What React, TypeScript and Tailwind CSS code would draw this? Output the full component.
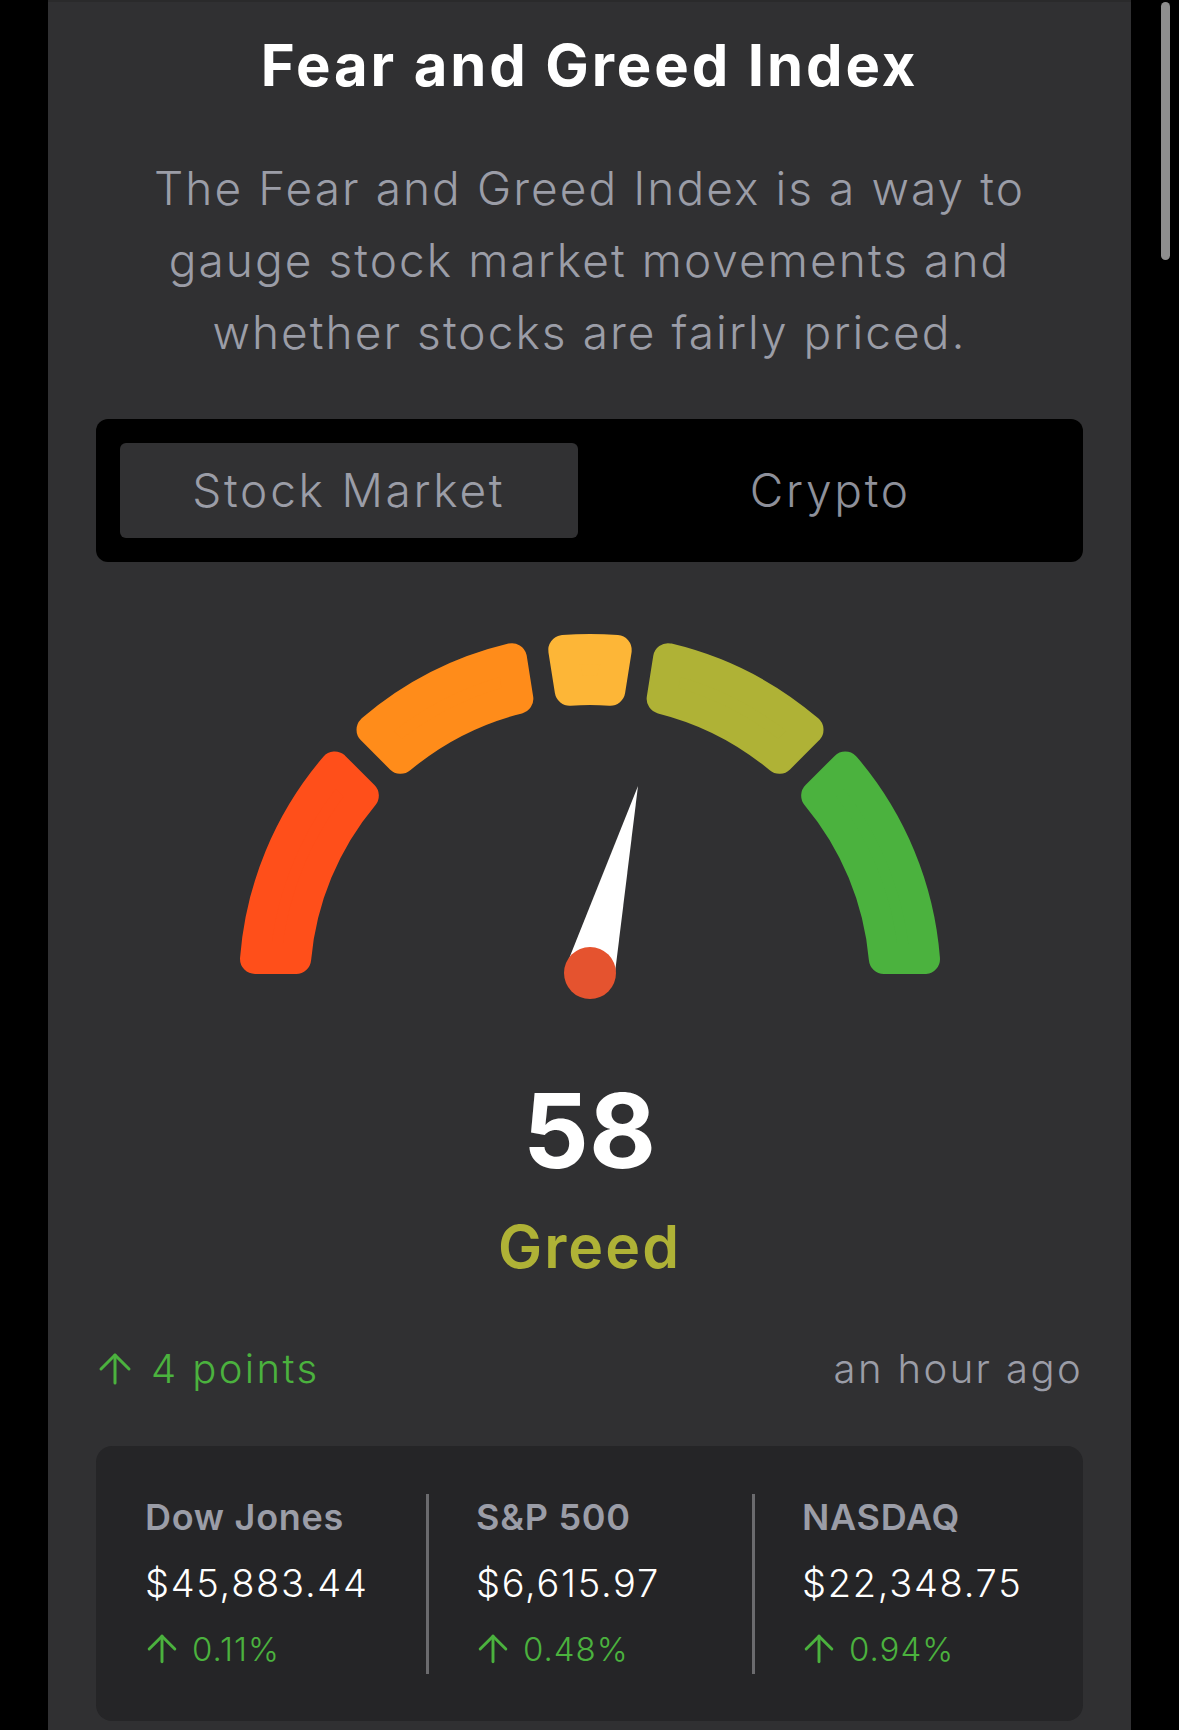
import { ArrowUp } from "lucide-react";

const CX = 360;
const CY = 364;
const R_OUT = 351;
const R_IN = 280;
const GAP = 11;
const CORNER = 15;

const segments = [
  { from: 0, to: 45, color: "#FF4F1A" },
  { from: 45, to: 81, color: "#FF8C1A" },
  { from: 81, to: 99, color: "#FDB637" },
  { from: 99, to: 135, color: "#AFB236" },
  { from: 135, to: 180, color: "#4BB23E" },
];

const markets = [
  { name: "Dow Jones", price: "$45,883.44", change: "0.11%" },
  { name: "S&P 500", price: "$6,615.97", change: "0.48%" },
  { name: "NASDAQ", price: "$22,348.75", change: "0.94%" },
];

// angle measured from the left end of the gauge, going over the top
function point(theta: number, rho: number) {
  const a = (theta * Math.PI) / 180;
  return `${(CX - rho * Math.cos(a)).toFixed(2)} ${(CY - rho * Math.sin(a)).toFixed(2)}`;
}

function segmentPath(from: number, to: number) {
  const d = GAP + CORNER;
  const ro = R_OUT - CORNER;
  const ri = R_IN + CORNER;
  const offO = (Math.asin(d / ro) * 180) / Math.PI;
  const offI = (Math.asin(d / ri) * 180) / Math.PI;
  return [
    `M ${point(from + offO, ro)}`,
    `A ${ro} ${ro} 0 0 1 ${point(to - offO, ro)}`,
    `L ${point(to - offI, ri)}`,
    `A ${ri} ${ri} 0 0 0 ${point(from + offI, ri)}`,
    "Z",
  ].join(" ");
}

function Gauge({ value }: { value: number }) {
  const theta = (value / 100) * 180;
  const a = (theta * Math.PI) / 180;
  const px = CX;
  const py = CY - 12;
  const ux = -Math.cos(a);
  const uy = -Math.sin(a);
  const len = 193;
  const half = 25;
  const tip = `${px + ux * len},${py + uy * len}`;
  const b1 = `${px - uy * half},${py + ux * half}`;
  const b2 = `${px + uy * half},${py - ux * half}`;
  return (
    <svg width="720" height="400" viewBox="0 0 720 400" className="mx-auto block">
      {segments.map((s) => (
        <path
          key={s.from}
          d={segmentPath(s.from, s.to)}
          fill={s.color}
          stroke={s.color}
          strokeWidth={CORNER * 2}
          strokeLinejoin="round"
        />
      ))}
      <polygon points={`${tip} ${b1} ${b2}`} fill="#ffffff" />
      <circle cx={px} cy={py} r="26" fill="#E5532F" />
    </svg>
  );
}

export default function App() {
  return (
    <div className="relative min-h-screen bg-black" style={{ fontFamily: "Inter, 'Open Sans', sans-serif" }}>
      <div className="ml-[48px] w-[1083px] min-h-[1730px] bg-[#303032] border-t-2 border-[#2a2a2b] px-12">
        <h1 className="pt-[34px] text-center text-[58px] font-bold leading-none tracking-[0.05em] text-white">
          Fear and Greed Index
        </h1>
        <p className="mt-[58px] text-center text-[46px] font-light leading-[72px] tracking-[0.045em] text-[#9b9da7]">
          The Fear and Greed Index is a way to
          <br />
          gauge stock market movements and
          <br />
          whether stocks are fairly priced.
        </p>

        <div className="mt-[51px] grid grid-cols-2 gap-6 rounded-xl bg-black p-6">
          <div className="flex h-[95px] items-center justify-center rounded-md bg-[#313133] text-[46px] font-light tracking-[0.06em] text-[#9b9da7]">
            Stock Market
          </div>
          <div className="flex h-[95px] items-center justify-center text-[46px] font-light tracking-[0.06em] text-[#8e909a]">
            Crypto
          </div>
        </div>

        <div className="mt-[59px]">
          <Gauge value={58} />
        </div>

        <div className="mt-[58px] text-center text-[103px] font-bold leading-none text-white">58</div>
        <div className="mt-[35px] text-center text-[59px] font-semibold leading-none tracking-[0.035em] text-[#AFB236]">
          Greed
        </div>

        <div className="mt-[69px] flex items-center justify-between text-[40px] font-light leading-none tracking-[0.06em]">
          <div className="flex items-center gap-3 text-[#4BB23E]">
            <ArrowUp size={48} strokeWidth={1.5} className="-ml-[5px]" />
            <span>4 points</span>
          </div>
          <span className="text-[#9b9da7]">an hour ago</span>
        </div>

        <div className="mt-[53px] flex rounded-2xl bg-[#252527] px-[49px] pt-12 pb-[47px]">
          {markets.map((m, i) => (
            <div
              key={m.name}
              className={
                i === 0
                  ? "w-[281px] h-[180px]"
                  : i === 1
                  ? "w-[326px] h-[180px] border-l-[3px] border-[#6b6b6e] pl-[47px]"
                  : "h-[180px] border-l-[3px] border-[#6b6b6e] pl-[47px]"
              }
            >
              <div className="mt-[5px] text-[36px] font-semibold leading-none tracking-[0.02em] text-[#9b9da7]">
                {m.name}
              </div>
              <div className="mt-[29px] text-[38px] font-light leading-none tracking-[0.045em] text-white">
                {m.price}
              </div>
              <div className="mt-[25px] flex items-center gap-2 text-[33px] font-light leading-none tracking-[0.03em] text-[#4BB23E]">
                <ArrowUp size={44} strokeWidth={1.6} className="-ml-[5px]" />
                <span>{m.change}</span>
              </div>
            </div>
          ))}
        </div>
      </div>

      <div className="absolute left-[1161px] top-[2px] h-[258px] w-[9px] rounded-full bg-[#8e8e8e]" />
    </div>
  );
}
